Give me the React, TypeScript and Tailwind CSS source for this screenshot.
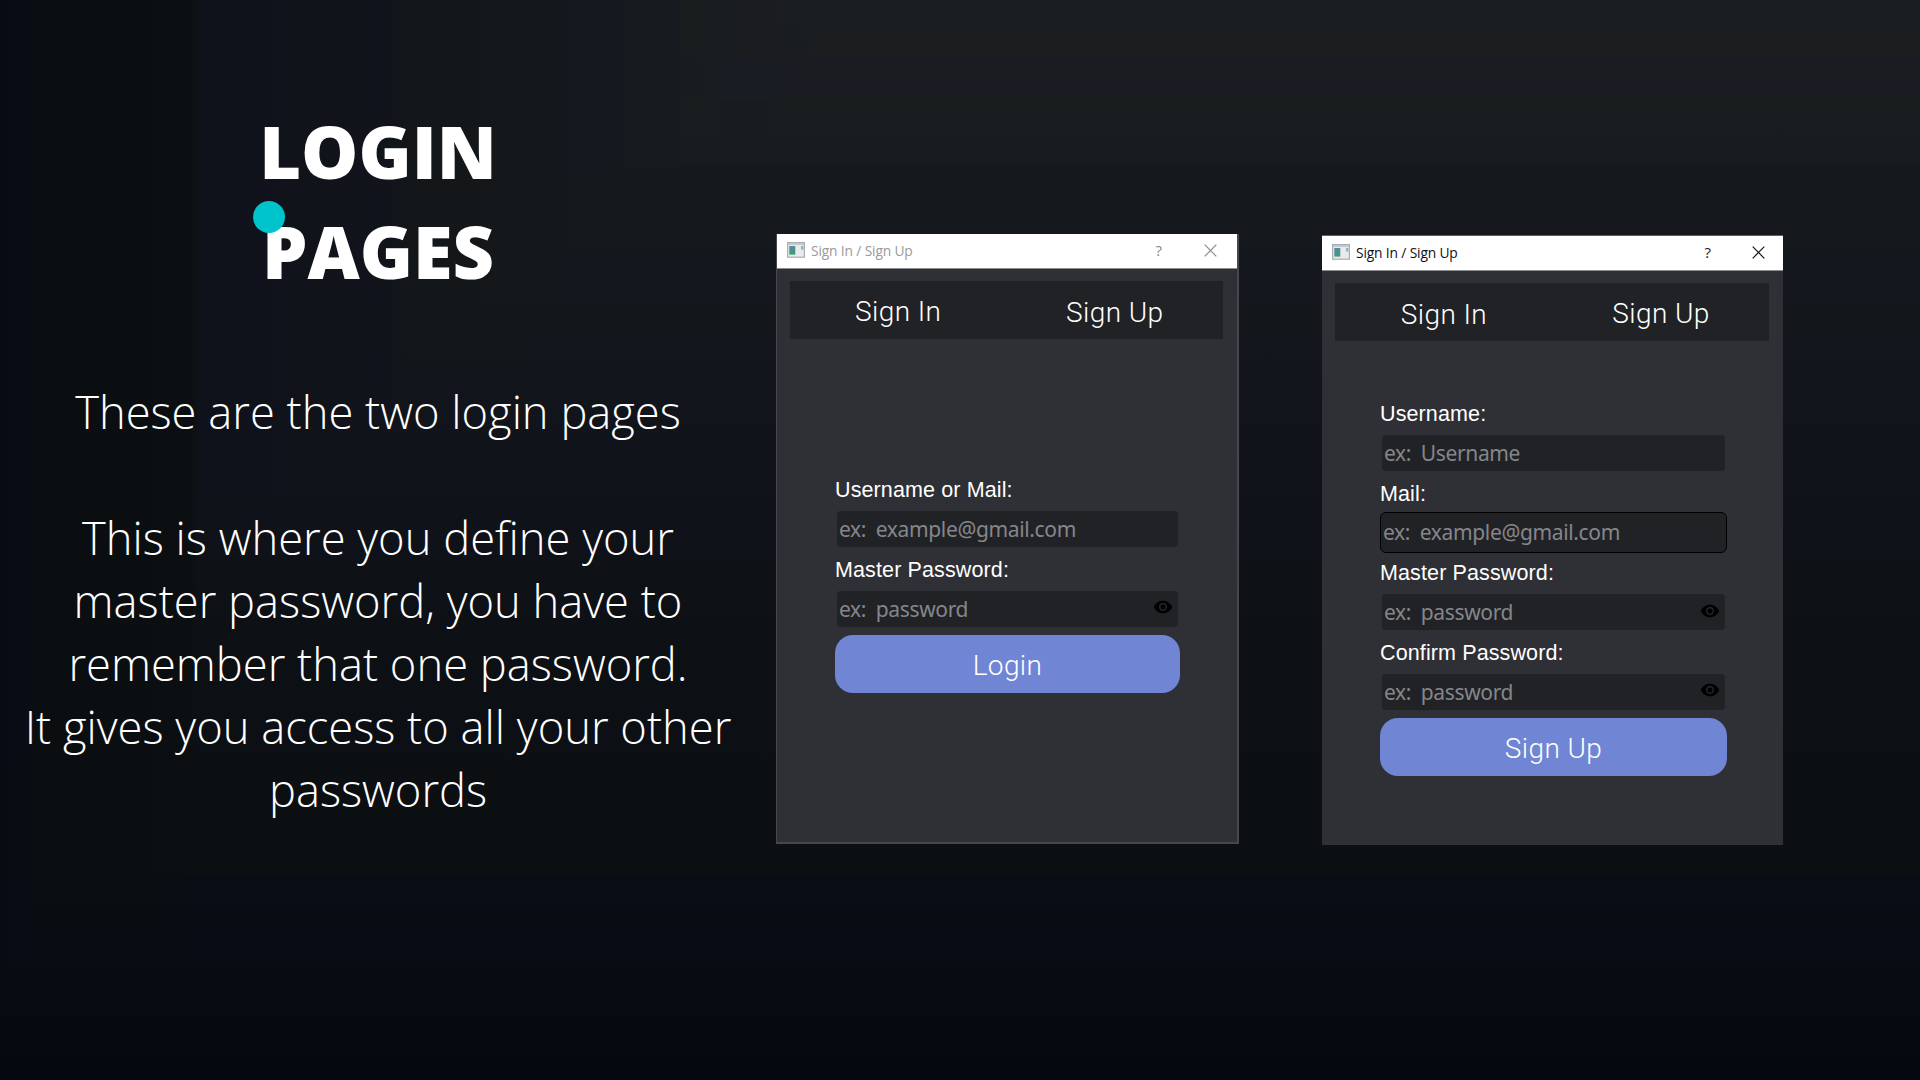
import React from "react";

type FieldProps = { label: string; hint: string; focused?: boolean; secret?: boolean };

function Eye() {
  return (
    <svg viewBox="0 0 24 24" className="mb-[3px] h-5 w-5 shrink-0" fill="#000">
      <path d="M12 4.5C7 4.5 2.73 7.61 1 12c1.73 4.39 6 7.5 11 7.5s9.27-3.11 11-7.5c-1.73-4.39-6-7.5-11-7.5zM12 17c-2.76 0-5-2.24-5-5s2.24-5 5-5 5 2.24 5 5-2.24 5-5 5zm0-8c-1.66 0-3 1.34-3 3s1.34 3 3 3 3-1.34 3-3-1.34-3-3-3z" />
    </svg>
  );
}

function AppIcon() {
  return (
    <svg viewBox="0 0 18 16" className="mb-[2px] h-4 w-[18px] shrink-0">
      <defs>
        <linearGradient id="pane" x1="0" y1="0" x2="0.3" y2="1">
          <stop offset="0" stopColor="#5b86ad" />
          <stop offset="1" stopColor="#3f9a78" />
        </linearGradient>
      </defs>
      <rect x="0.6" y="0.6" width="16.8" height="14.6" fill="#e9eaec" stroke="#a9adb2" strokeWidth="1.2" />
      <rect x="1" y="1" width="16" height="2" fill="#c3c7cc" />
      <rect x="2.3" y="4" width="6" height="8.6" fill="url(#pane)" />
      <rect x="14" y="4" width="2.4" height="3.6" fill="#8fb5c0" />
    </svg>
  );
}

function Field({ label, hint, focused, secret }: FieldProps) {
  return (
    <div className="flex h-[79.5px] flex-col">
      <div className="h-[35px] pt-[2px] font-['Liberation_Sans',sans-serif] text-[21.5px] leading-[24px] tracking-[0.12px] text-white">
        {label}
      </div>
      <div
        className={
          focused
            ? "-mt-[3px] flex h-[41px] items-center rounded-[6px] border border-black bg-[#212226] px-[2px]"
            : "mx-[2px] flex h-9 items-center rounded-[4px] bg-[#212226] px-[2px]"
        }
      >
        <span className="grow whitespace-pre font-['Noto_Sans',sans-serif] text-[21px] leading-[30px] tracking-[-0.35px] [word-spacing:4.5px] text-[#85868a]">
          {hint}
        </span>
        {secret && <div className="mr-[3px]"><Eye /></div>}
      </div>
    </div>
  );
}

type WindowProps = {
  active?: boolean;
  action: string;
  fields: FieldProps[];
};

function LoginWindow({ active, action, fields }: WindowProps) {
  return (
    <section
      className={
        active
          ? "mt-[235px] ml-[83px] flex h-[610px] w-[461px] flex-col border-t border-[#5a6068] bg-[#2f3035]"
          : "mt-[234px] flex h-[610px] w-[463px] flex-col border-r-2 border-b-2 border-l border-[#45474c] bg-[#2f3035]"
      }
    >
      <header className="flex h-[35px] shrink-0 items-center border-b border-[#8d8e90] bg-white pl-[10px]">
        <AppIcon />
        <span
          className={
            active
              ? "ml-[6px] grow font-['Open_Sans',sans-serif] text-[13.8px] tracking-[-0.15px] text-[#101018]"
              : "ml-[6px] grow font-['Open_Sans',sans-serif] text-[13.8px] tracking-[-0.15px] text-[#9a9a9a]"
          }
        >
          Sign In / Sign Up
        </span>
        <span
          className={
            active
              ? "mr-[41px] pb-[2px] font-['Open_Sans',sans-serif] text-[15px] text-[#202020]"
              : "mr-[42px] pb-[2px] font-['Open_Sans',sans-serif] text-[15px] text-[#8a8a8a]"
          }
        >
          ?
        </span>
        <svg
          viewBox="0 0 13 13"
          className={active ? "mr-[18px] mb-[2px] h-[13px] w-[13px] text-[#151515]" : "mr-[20px] mb-[2px] h-[13px] w-[13px] text-[#8a8a8a]"}
          stroke="currentColor"
          strokeWidth="1.2"
        >
          <path d="M0.7 0.7L12.3 12.3M12.3 0.7L0.7 12.3" />
        </svg>
      </header>
      <nav className="mt-3 mr-[14px] ml-[13px] grid h-[58px] shrink-0 grid-cols-2 items-center bg-[#212226] text-center font-['Roboto',sans-serif] text-[28px] font-[350] tracking-[0.4px] text-white">
        <span className={active ? "pl-px pt-[5px]" : "pt-[3px]"}>Sign In</span>
        <span className={active ? "pl-px pt-1" : "pt-[5px]"}>Sign Up</span>
      </nav>
      <div
        className={
          active
            ? "mt-[59px] mr-[56px] ml-[58px] flex flex-col"
            : "mt-[137px] mr-[57px] ml-[58px] flex flex-col"
        }
      >
        {fields.map((f) => (
          <Field key={f.label} {...f} />
        ))}
        <div className="flex h-[58px] items-center justify-center rounded-[18px] bg-[#7086d5] pt-[3px] font-['Roboto',sans-serif] text-[28px] font-[350] tracking-[0.4px] text-white">
          {action}
        </div>
      </div>
    </section>
  );
}

export default function App() {
  return (
    <div className="h-[1080px] w-[1920px] overflow-hidden bg-[linear-gradient(180deg,#1b1f22_0%,#1b1d1f_5%,#1a1c24_6%,#1a1c24_8.5%,#191d1e_9.5%,#191c1e_14.9%,#16191d_15.1%,#15181c_22%,#14171e_26%,#13161a_30%,#12151c_34%,#10131a_45%,#0d1014_58%,#0c0f12_80.9%,#0a0d15_81.2%,#080b12_91%,#06080f_100%),linear-gradient(90deg,#080b14_0%,#090c13_1.4%,#0b0e11_1.9%,#0c0f12_10%,#0f121a_10.4%,#11141b_20.5%,#13171a_21.2%,#14171b_29%,#151820_30%,#16191d_32.5%,#171a1e_35.2%,#191d1e_35.5%,#1a1c24_39.5%,#1b1f22_43%)] bg-blend-darken">
      <main className="flex h-full w-full">
        <div className="flex w-[776px] shrink-0 flex-col pr-[20px] pt-[101px] text-center font-['Open_Sans',sans-serif] text-white">
          <div className="relative mx-auto">
            <h1 className="text-[72px] leading-[100px] font-extrabold">
              LOGIN
              <br />
              PAGES
            </h1>
            <span className="absolute top-[100px] -left-[6.5px] h-8 w-8 rounded-full bg-[#00c4cc]" />
          </div>
          <p className="mt-[78.5px] text-[45.3px] leading-[63px] font-light whitespace-nowrap">
            These are the two login pages
            <br />
            <br />
            This is where you define your
            <br />
            master password, you have to
            <br />
            remember that one password.
            <br />
            It gives you access to all your other
            <br />
            passwords
          </p>
        </div>
        <LoginWindow
          action="Login"
          fields={[
            { label: "Username or Mail:", hint: "ex: example@gmail.com" },
            { label: "Master Password:", hint: "ex: password", secret: true },
          ]}
        />
        <LoginWindow
          active
          action="Sign Up"
          fields={[
            { label: "Username:", hint: "ex: Username" },
            { label: "Mail:", hint: "ex: example@gmail.com", focused: true },
            { label: "Master Password:", hint: "ex: password", secret: true },
            { label: "Confirm Password:", hint: "ex: password", secret: true },
          ]}
        />
      </main>
    </div>
  );
}
